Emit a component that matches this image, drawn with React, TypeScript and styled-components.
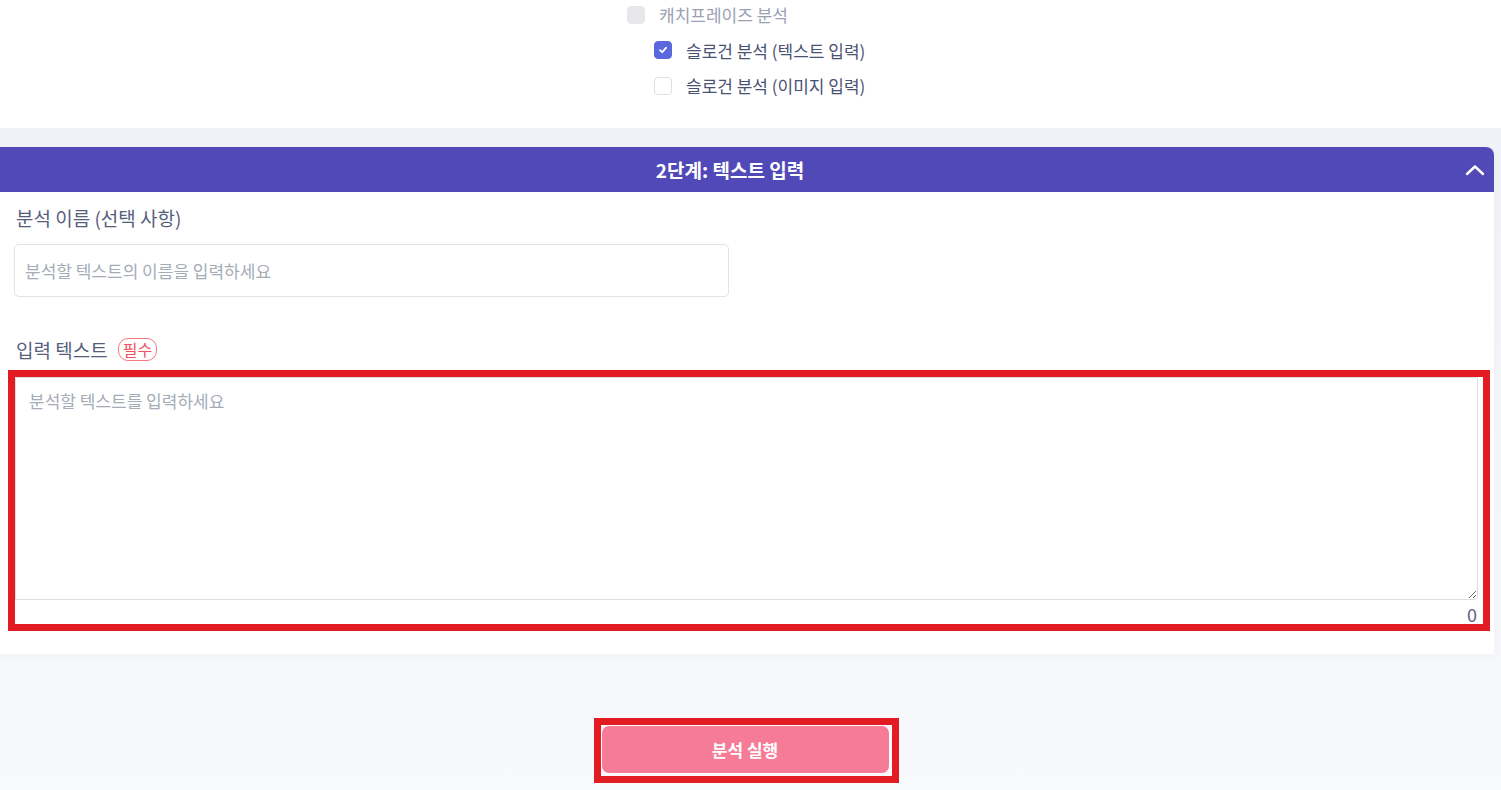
import React, { useState } from "react";
import styled, { createGlobalStyle } from "styled-components";

const Global = createGlobalStyle`
  html, body { margin: 0; padding: 0; }
  body {
    background: linear-gradient(180deg, #eef0f5 0%, #f4f5f9 40%, #f8f9fd 100%);
    font-family: "Noto Sans CJK KR", "Noto Sans", sans-serif;
    width: 1501px;
    height: 790px;
    overflow: hidden;
  }
  * { box-sizing: border-box; }
`;

const Page = styled.div`
  display: flex;
  flex-direction: column;
  width: 1501px;
`;

const TopCard = styled.div`
  background: #ffffff;
  height: 128px;
  padding-left: 627px;
  overflow: hidden;
`;

const CheckList = styled.div`
  display: flex;
  flex-direction: column;
  margin-top: -3px;
`;

const CheckRow = styled.label<{ $indent?: boolean }>`
  display: flex;
  align-items: center;
  gap: 14px;
  height: 35.5px;
  margin-left: ${(p) => (p.$indent ? "27px" : "0")};
  font-size: 17px;
  color: ${(p) => (p.$indent ? "#4a5273" : "#9aa1b2")};
`;

const Box = styled.span<{ $state: "disabled" | "checked" | "empty" }>`
  width: 18px;
  height: 18px;
  flex: none;
  border-radius: 4px;
  display: flex;
  align-items: center;
  justify-content: center;
  background: ${(p) =>
    p.$state === "disabled" ? "#e5e7eb" : p.$state === "checked" ? "#5b67dc" : "#ffffff"};
  border: 1px solid
    ${(p) => (p.$state === "disabled" ? "#e5e7eb" : p.$state === "checked" ? "#5b67dc" : "#dcdfe6")};
`;

const Gap = styled.div`
  height: 19px;
`;

const Card = styled.section`
  width: 1494px;
  background: #ffffff;
  border-top-right-radius: 8px;
  display: flex;
  flex-direction: column;
  box-shadow: 0 2px 8px rgba(30, 40, 80, 0.04);
`;

const Header = styled.div`
  height: 45px;
  background: #5249b9;
  border-top-right-radius: 8px;
  display: flex;
  align-items: center;
  padding-right: 4px;
`;

const HeaderTitle = styled.h2`
  flex: 1;
  margin: 0;
  text-align: center;
  color: #ffffff;
  font-size: 19px;
  font-weight: 700;
`;

const Chevron = styled.span`
  width: 30px;
  display: flex;
  align-items: center;
  justify-content: center;
`;

const Body = styled.div`
  display: flex;
  flex-direction: column;
  padding: 11px 11px 30px 14px;
`;

const Label = styled.div`
  display: flex;
  align-items: center;
  gap: 10px;
  font-size: 19px;
  color: #56607d;
  height: 28px;
  padding-left: 2px;
`;

const Required = styled.span`
  font-size: 16px;
  color: #f0505f;
  border: 1px solid #f3787f;
  border-radius: 10px;
  padding: 0 4px;
  line-height: 21px;
`;

const NameInput = styled.input`
  margin-top: 13px;
  width: 715px;
  height: 53px;
  border: 1px solid #e1e3ea;
  border-radius: 5px;
  padding: 0 10px;
  font-family: inherit;
  font-size: 17px;
  color: #333;
  outline: none;
  &::placeholder { color: #a6abb8; }
`;

const Spacer = styled.div<{ $h: number }>`
  height: ${(p) => p.$h}px;
`;

const AreaWrap = styled.div`
  margin-top: 14px;
  margin-left: 1px;
  width: 1468px;
  padding-right: 5px;
  display: flex;
  flex-direction: column;
  outline: 7px solid #e31c23;
`;

const TextArea = styled.textarea`
  height: 223px;
  width: 100%;
  border: 1px solid #dcdee5;
  border-radius: 0 0 4px 0;
  padding: 10px 13px;
  font-family: inherit;
  font-size: 17px;
  color: #333;
  resize: vertical;
  outline: none;
  display: block;
  &::placeholder { color: #a6abb8; }
`;

const Counter = styled.div`
  height: 24px;
  text-align: right;
  font-size: 18px;
  color: #5a6482;
  line-height: 28px;
  padding-right: 1px;
`;

const ButtonRow = styled.div`
  display: flex;
  justify-content: center;
  padding: 71px 9px 0 0;
`;

const Highlight = styled.div`
  display: flex;
  padding: 0 2px 2px 0;
  outline: 7px solid #e31c23;
`;

const RunButton = styled.button`
  width: 289px;
  height: 49px;
  background: #f67b96;
  border: 1px solid #ffffff;
  border-radius: 8px;
  color: #ffffff;
  font-family: inherit;
  font-size: 17px;
  font-weight: 700;
  cursor: pointer;
`;

export default function App() {
  const [text, setText] = useState("");
  return (
    <Page>
      <Global />
      <TopCard>
        <CheckList>
          <CheckRow>
            <Box $state="disabled" />
            캐치프레이즈 분석
          </CheckRow>
          <CheckRow $indent>
            <Box $state="checked">
              <svg width="10" height="10" viewBox="0 0 10 10">
                <path d="M2 5.2 L4.2 7.2 L8 2.8" fill="none" stroke="#fff" strokeWidth="1.8" strokeLinecap="round" strokeLinejoin="round" />
              </svg>
            </Box>
            슬로건 분석 (텍스트 입력)
          </CheckRow>
          <CheckRow $indent>
            <Box $state="empty" />
            슬로건 분석 (이미지 입력)
          </CheckRow>
        </CheckList>
      </TopCard>
      <Gap />
      <Card>
        <Header>
          <HeaderTitle>2단계: 텍스트 입력</HeaderTitle>
          <Chevron>
            <svg width="20" height="14" viewBox="0 0 20 14">
              <path d="M2 11 L10 3.5 L18 11" fill="none" stroke="#fff" strokeWidth="2.4" strokeLinecap="round" strokeLinejoin="round" />
            </svg>
          </Chevron>
        </Header>
        <Body>
          <Label>분석 이름 (선택 사항)</Label>
          <NameInput placeholder="분석할 텍스트의 이름을 입력하세요" />
          <Spacer $h={38} />
          <Label>
            입력 텍스트 <Required>필수</Required>
          </Label>
          <AreaWrap>
            <TextArea
              placeholder="분석할 텍스트를 입력하세요"
              value={text}
              onChange={(e) => setText(e.target.value)}
            />
            <Counter>{text.length}</Counter>
          </AreaWrap>
        </Body>
      </Card>
      <ButtonRow>
        <Highlight>
          <RunButton>분석 실행</RunButton>
        </Highlight>
      </ButtonRow>
    </Page>
  );
}
